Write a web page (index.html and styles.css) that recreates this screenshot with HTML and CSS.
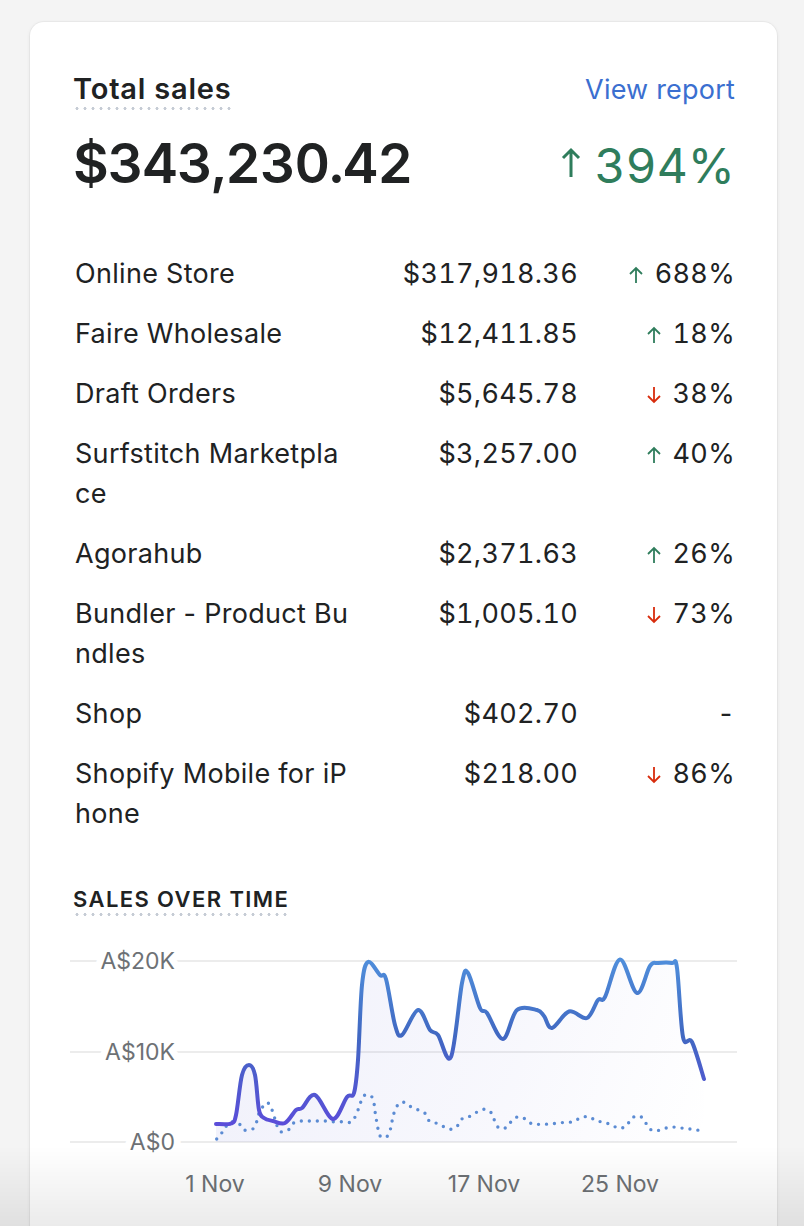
FILE: index.html
```html
<!DOCTYPE html>
<html lang="en">

<head>
    <meta charset="UTF-8">
    <meta name="viewport" content="width=device-width, initial-scale=1.0">
    <title>Total sales</title>
    <link rel="stylesheet" href="styles.css">
</head>

<body>
    <div class="card">
        <div class="card-header">
            <span class="card-title dotted">Total sales</span>
            <a class="report-link" href="#">View report</a>
        </div>

        <div class="totals">
            <span class="total-amount">$343,230.42</span>
            <span class="total-change up">
                <svg class="arrow-lg" viewBox="0 0 20 32"><path d="M10 30V3M2 11l8-8 8 8" /></svg>394%
            </span>
        </div>

        <div class="channels">
            <div class="channel-name">Online Store</div>
            <div class="channel-amount">$317,918.36</div>
            <div class="channel-change up"><svg class="arrow" viewBox="0 0 14 18"><path d="M7 17V2M1 8l6-6 6 6" /></svg>688%</div>

            <div class="channel-name">Faire Wholesale</div>
            <div class="channel-amount">$12,411.85</div>
            <div class="channel-change up"><svg class="arrow" viewBox="0 0 14 18"><path d="M7 17V2M1 8l6-6 6 6" /></svg>18%</div>

            <div class="channel-name">Draft Orders</div>
            <div class="channel-amount">$5,645.78</div>
            <div class="channel-change down"><svg class="arrow" viewBox="0 0 14 18"><path d="M7 1V16M1 10l6 6 6-6" /></svg>38%</div>

            <div class="channel-name">Surfstitch Marketplace</div>
            <div class="channel-amount">$3,257.00</div>
            <div class="channel-change up"><svg class="arrow" viewBox="0 0 14 18"><path d="M7 17V2M1 8l6-6 6 6" /></svg>40%</div>

            <div class="channel-name">Agorahub</div>
            <div class="channel-amount">$2,371.63</div>
            <div class="channel-change up"><svg class="arrow" viewBox="0 0 14 18"><path d="M7 17V2M1 8l6-6 6 6" /></svg>26%</div>

            <div class="channel-name">Bundler - Product Bundles</div>
            <div class="channel-amount">$1,005.10</div>
            <div class="channel-change down"><svg class="arrow" viewBox="0 0 14 18"><path d="M7 1V16M1 10l6 6 6-6" /></svg>73%</div>

            <div class="channel-name">Shop</div>
            <div class="channel-amount">$402.70</div>
            <div class="channel-change">-</div>

            <div class="channel-name">Shopify Mobile for iPhone</div>
            <div class="channel-amount">$218.00</div>
            <div class="channel-change down"><svg class="arrow" viewBox="0 0 14 18"><path d="M7 1V16M1 10l6 6 6-6" /></svg>86%</div>
        </div>

        <div class="chart-heading">
            <span class="chart-title dotted">Sales over time</span>
        </div>

        <svg class="chart" viewBox="70 940 667 262">
            <defs>
                <linearGradient id="lineGrad" gradientUnits="userSpaceOnUse" x1="0" y1="960" x2="0" y2="1125">
                    <stop offset="0" stop-color="#4f8edb" />
                    <stop offset="0.45" stop-color="#4169c2" />
                    <stop offset="1" stop-color="#5b4dd9" />
                </linearGradient>
                <linearGradient id="areaGrad" gradientUnits="userSpaceOnUse" x1="216" y1="960" x2="704" y2="1142">
                    <stop offset="0" stop-color="#6b6fd6" stop-opacity="0.10" />
                    <stop offset="0.6" stop-color="#6b6fd6" stop-opacity="0.05" />
                    <stop offset="1" stop-color="#6b6fd6" stop-opacity="0" />
                </linearGradient>
            </defs>

            <g class="grid-lines">
                <line x1="70" y1="961" x2="737" y2="961" />
                <line x1="70" y1="1052" x2="737" y2="1052" />
                <line x1="70" y1="1142" x2="737" y2="1142" />
            </g>

            <g class="y-labels">
                <text x="175" y="969">A$20K</text>
                <text x="175" y="1060">A$10K</text>
                <text x="175" y="1150">A$0</text>
            </g>

            <path id="salesArea" class="sales-area" />
            <path id="previousLine" class="previous-line" />
            <path id="salesLine" class="sales-line" />

            <g class="x-labels">
                <text x="215" y="1192">1 Nov</text>
                <text x="350" y="1192">9 Nov</text>
                <text x="484" y="1192">17 Nov</text>
                <text x="620" y="1192">25 Nov</text>
            </g>
        </svg>
    </div>

    <div class="bottom-fade"></div>

    <script>
        const current = [
            [216, 1124], [231, 1123.5], [236, 1115], [242, 1075], [249, 1065], [255, 1075], [259, 1110],
            [264, 1118], [273, 1121], [285, 1123], [296, 1110], [302, 1108], [315, 1095], [333, 1119],
            [347, 1097], [354, 1093], [358, 1060], [362, 985], [368, 962], [380, 975], [386, 979],
            [395, 1025], [402, 1035], [418, 1010], [430, 1030], [438, 1035], [451, 1057], [462, 983],
            [468, 973], [480, 1008], [487, 1013], [503, 1039], [517, 1010], [537, 1010], [544, 1016],
            [552, 1028], [569, 1011.5], [587, 1018], [598, 1000], [605, 997], [620, 959.5], [637, 993],
            [650, 966], [658, 963], [672, 963], [677, 968], [683, 1037], [692, 1042], [704, 1079]
        ];

        const previous = [
            [216.7, 1139], [221.7, 1133], [225.7, 1126.7], [231.7, 1121.7], [239.3, 1124], [244.3, 1130],
            [252.7, 1129], [256.7, 1121.7], [259, 1113.3], [263.3, 1106], [267.7, 1102.7], [271.7, 1109.3],
            [274.3, 1116.7], [276.7, 1125], [280.7, 1131.7], [288.3, 1130], [293.3, 1123.3], [301, 1121],
            [309, 1121], [316.7, 1121], [325, 1121], [333.3, 1121.7], [342.3, 1121.7], [350, 1122.3],
            [354.3, 1118.3], [358.3, 1109.3], [360.7, 1102.3], [365, 1095], [371.7, 1096.7], [374.3, 1105],
            [375.3, 1113.3], [376.7, 1121.7], [378.3, 1130], [380.7, 1136.7], [387, 1136.5], [390.7, 1128.3],
            [392.3, 1120], [394.3, 1112.3], [398.3, 1104.3], [404, 1102.3], [410.7, 1106.7], [418.3, 1110],
            [425, 1113.3], [429.3, 1121], [436.7, 1123.3], [444, 1126.7], [451.7, 1129.3], [458.3, 1125],
            [462.7, 1118.3], [470.7, 1116], [477.7, 1111.7], [485, 1109.3], [491.7, 1113.3], [495, 1121.7],
            [499.3, 1128.3], [506.7, 1127.3], [511.7, 1121], [518.3, 1116.7], [526, 1119.3], [532.3, 1124],
            [540.7, 1124.3], [549, 1124], [556.7, 1123.3], [565, 1122.3], [573.3, 1121.7], [580.7, 1117.7],
            [589, 1116.7], [596, 1120.7], [604, 1122.3], [611.7, 1125], [619, 1128.3], [626.7, 1125.7],
            [630.7, 1119], [638.3, 1115.7], [644.3, 1120], [648.3, 1127.7], [655, 1131], [662.7, 1129],
            [670.7, 1127], [679, 1127.7], [686.7, 1128.7], [695, 1129.7], [703.3, 1131]
        ];

        function smoothPath(pts) {
            const r = n => Math.round(n * 10) / 10;
            let d = `M${pts[0][0]},${pts[0][1]}`;
            for (let i = 0; i < pts.length - 1; i++) {
                const p0 = pts[i - 1] || pts[i];
                const p1 = pts[i];
                const p2 = pts[i + 1];
                const p3 = pts[i + 2] || p2;
                const c1x = p1[0] + (p2[0] - p0[0]) / 6;
                const c1y = p1[1] + (p2[1] - p0[1]) / 6;
                const c2x = p2[0] - (p3[0] - p1[0]) / 6;
                const c2y = p2[1] - (p3[1] - p1[1]) / 6;
                d += ` C${r(c1x)},${r(c1y)} ${r(c2x)},${r(c2y)} ${p2[0]},${p2[1]}`;
            }
            return d;
        }

        const line = smoothPath(current);
        const last = current[current.length - 1];
        document.getElementById('salesLine').setAttribute('d', line);
        document.getElementById('salesArea').setAttribute('d', `${line} L${last[0]},1142 L${current[0][0]},1142 Z`);
        document.getElementById('previousLine').setAttribute('d', smoothPath(previous));
    </script>
</body>

</html>
```

FILE: styles.css
```css
body {
    margin: 0;
    background-color: #f4f4f4;
    font-family: Inter, "Noto Sans", sans-serif;
    color: #202223;
    overflow: hidden;
}

.card {
    width: 747px;
    box-sizing: border-box;
    margin: 22px 0 0 30px;
    padding: 49px 42px 60px 43px;
    background-color: #fff;
    border-radius: 14px;
    box-shadow: 0 0 0 1px rgba(0, 0, 0, 0.03), 0 1px 4px rgba(0, 0, 0, 0.07);
}

.dotted {
    padding-bottom: 3px;
    background-image: radial-gradient(circle, #c6ccd5 1.3px, transparent 1.8px);
    background-size: 8px 3px;
    background-repeat: repeat-x;
    background-position: 0 100%;
}

.card-header {
    display: flex;
    justify-content: space-between;
    align-items: baseline;
    line-height: 36px;
}

.card-title {
    font-size: 29px;
    font-weight: 600;
    letter-spacing: 0.8px;
}

.report-link {
    font-size: 27px;
    color: #3b6fd0;
    text-decoration: none;
    letter-spacing: 0.2px;
}

.totals {
    display: flex;
    justify-content: space-between;
    align-items: baseline;
    margin-top: 23px;
    height: 60px;
    font-variant-numeric: tabular-nums;
}

.total-amount {
    font-size: 55px;
    line-height: 60px;
    font-weight: 600;
    letter-spacing: -1px;
}

.total-change {
    font-size: 48px;
    line-height: 55px;
    font-weight: 400;
}

.up {
    color: #2f7d5c;
}

.down .arrow {
    color: #d82c0d;
}

.arrow-lg {
    width: 20px;
    height: 32px;
    margin-right: 13px;
    vertical-align: 4px;
    fill: none;
    stroke: currentColor;
    stroke-width: 3;
}

.channels {
    display: grid;
    grid-template-columns: 276px 1fr 157px;
    row-gap: 20px;
    margin-top: 61px;
    font-size: 27px;
    line-height: 40px;
    letter-spacing: 0.3px;
}

.channel-name {
    padding-left: 2px;
    word-break: break-all;
}

.channel-amount,
.channel-change {
    text-align: right;
    font-variant-numeric: tabular-nums;
}

.channel-change {
    color: #202223;
}

.arrow {
    width: 14px;
    height: 18px;
    margin-right: 12px;
    vertical-align: -1px;
    fill: none;
    stroke: currentColor;
    stroke-width: 1.8;
}

.up .arrow {
    color: #2f7d5c;
}

.chart-heading {
    display: flex;
    margin-top: 51px;
}

.chart-title {
    font-size: 22px;
    line-height: 28px;
    font-weight: 600;
    letter-spacing: 1.4px;
    text-transform: uppercase;
}

.chart {
    display: block;
    width: 667px;
    height: 262px;
    margin: 24px 0 0 -3px;
}

.grid-lines line {
    stroke: #ececec;
    stroke-width: 2;
}

.y-labels text,
.x-labels text {
    font-family: Inter, "Noto Sans", sans-serif;
    font-size: 23px;
    fill: #6d7175;
}

.y-labels text {
    text-anchor: end;
    stroke: #fff;
    stroke-width: 14px;
    stroke-linejoin: round;
    paint-order: stroke;
}

.x-labels text {
    text-anchor: middle;
}

.sales-area {
    fill: url(#areaGrad);
}

.sales-line {
    fill: none;
    stroke: url(#lineGrad);
    stroke-width: 4;
    stroke-linecap: round;
    stroke-linejoin: round;
}

.previous-line {
    fill: none;
    stroke: #5b8bd3;
    stroke-width: 3.4;
    stroke-linecap: round;
    stroke-dasharray: 0 8;
}

.bottom-fade {
    position: fixed;
    left: 0;
    right: 0;
    bottom: 0;
    height: 80px;
    background: linear-gradient(to bottom, rgba(0, 0, 0, 0), rgba(0, 0, 0, 0.08));
    pointer-events: none;
}
```
